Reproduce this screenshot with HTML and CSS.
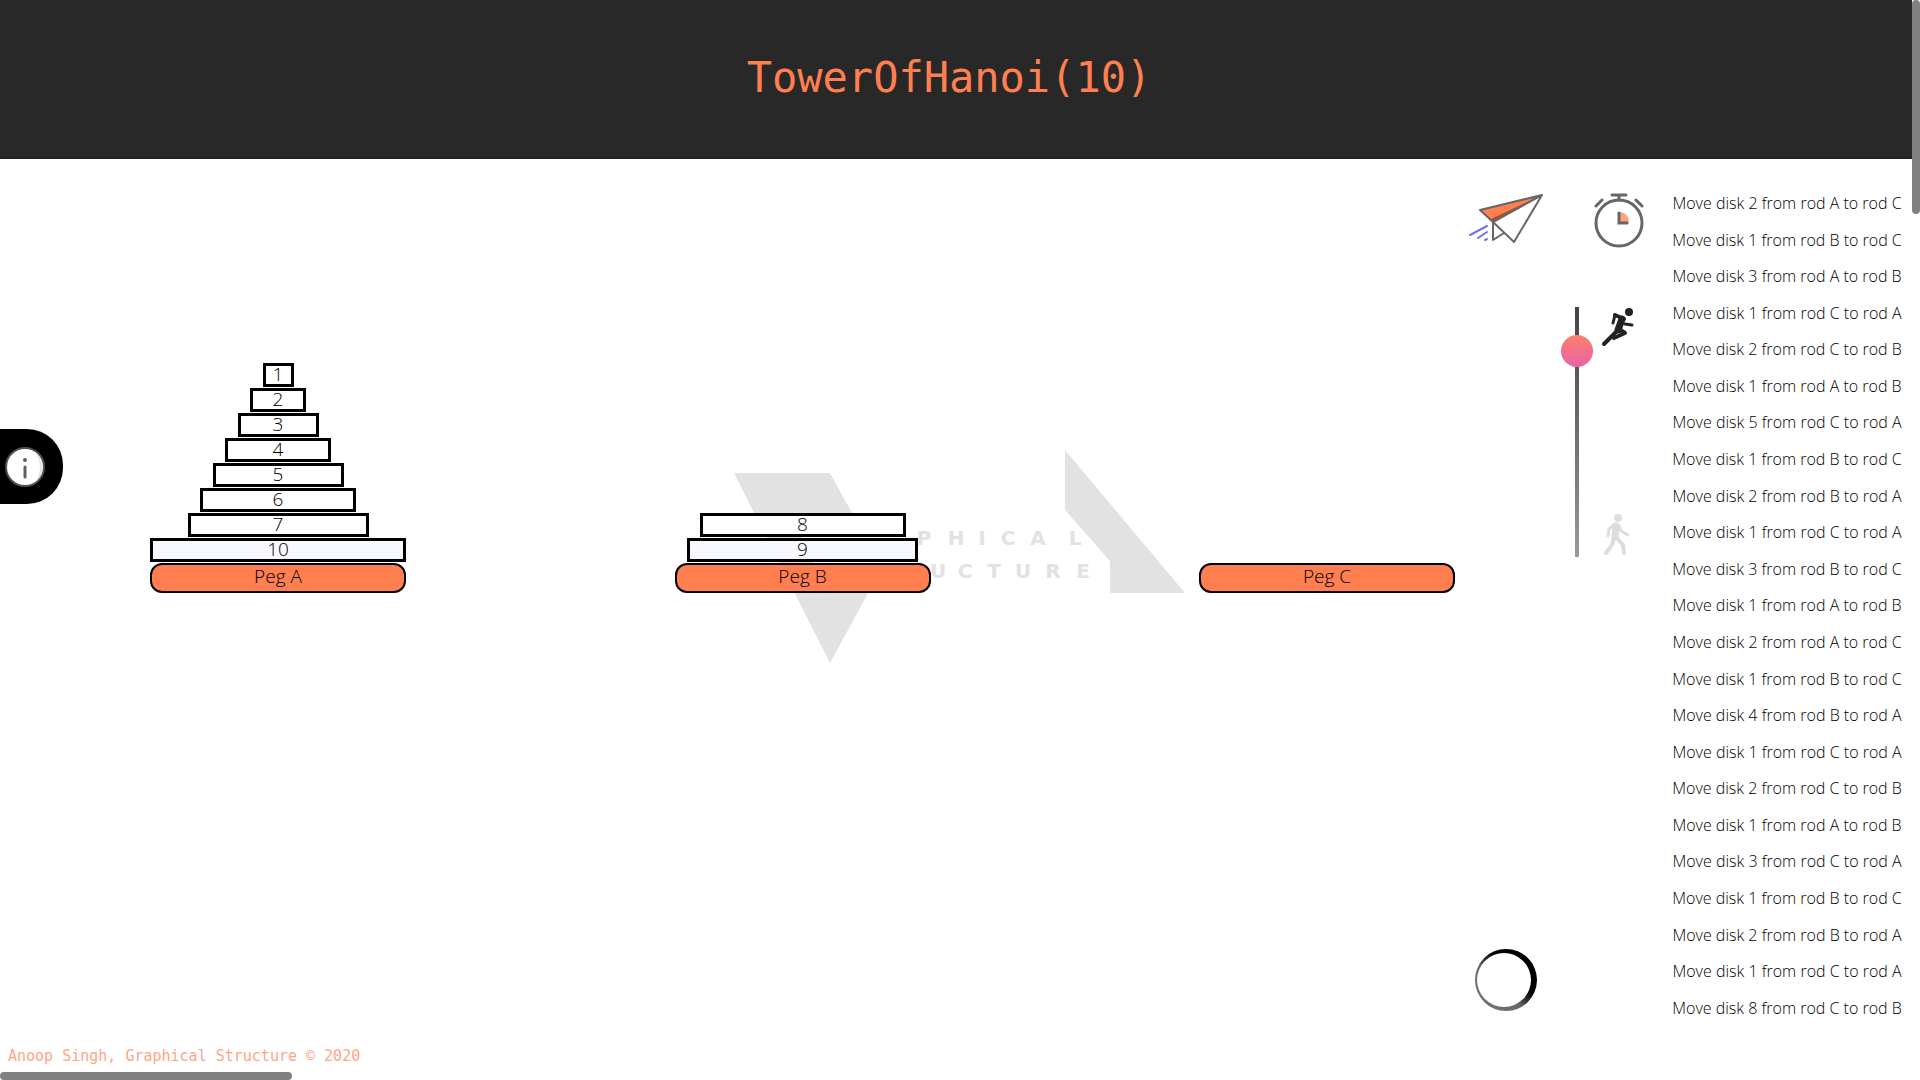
FILE: index.html
```html
<!DOCTYPE html>
<html lang="en">
<head>
<meta charset="utf-8">
<title>Tower of Hanoi</title>
<link rel="stylesheet" href="styles.css">
</head>
<body>
<header class="header"><h1 class="title">TowerOfHanoi(10)</h1></header>
<main class="main">
  <section class="board">
    <svg class="watermark" viewBox="0 0 470 220" aria-hidden="true">
      <path d="M13 23H109L131 63H71L98 125H157L109 213Z"/>
      <path d="M344 0L464 143H389V111L344 60Z"/>
      <g class="brand">
        <text y="95" x="203 235 261 287 317 354">PHICAL</text>
        <text y="128" x="217 244 273 302 332 362">UCTURE</text>
      </g>
    </svg>
    <div class="peg">
      <div class="disk d1">1</div>
      <div class="disk d2">2</div>
      <div class="disk d3">3</div>
      <div class="disk d4">4</div>
      <div class="disk d5">5</div>
      <div class="disk d6">6</div>
      <div class="disk d7">7</div>
      <div class="disk d10">10</div>
      <div class="base">Peg A</div>
    </div>
    <div class="peg">
      <div class="disk d8">8</div>
      <div class="disk d9">9</div>
      <div class="base">Peg B</div>
    </div>
    <div class="peg">
      <div class="base">Peg C</div>
    </div>
  </section>
  <aside class="tools">
    <div class="actions">
      <button class="icon-button" aria-label="Start">
        <svg width="78" height="56" viewBox="0 0 78 56" fill="none" stroke-linecap="round" stroke-linejoin="round">
          <path d="M12 17L74 2L25 29Z" fill="#ff7f50"/>
          <path d="M25 29L74 2L23 26Z" fill="#a8502f"/>
          <path d="M12 17L74 2L46 49L25 29ZM25 29L74 2M25 29V47L36 40" stroke="#666" stroke-width="2"/>
          <path d="M2 42L19 33M10 45L19 39M17 47L19 46" stroke="#7373e6" stroke-width="2"/>
        </svg>
      </button>
      <button class="icon-button" aria-label="Timer">
        <svg width="50" height="56" viewBox="0 0 50 56" fill="none" stroke="#666" stroke-linecap="round">
          <circle cx="25" cy="30" r="23" stroke-width="3"/>
          <path d="M25 2V7M18 2H32M2 13L8 7M42 7L48 13" stroke-width="3"/>
          <path d="M26 19A10 10 0 0 1 35 30H26Z" fill="#ff9f7c" stroke="none"/>
          <path d="M25 20V30H33" stroke-width="3"/>
        </svg>
      </button>
    </div>
    <div class="speed">
      <input class="slider" type="range" min="0" max="100" value="87" aria-label="Speed">
      <div class="paces">
        <svg width="34" height="40" viewBox="0 0 34 40" fill="none" stroke="#222" stroke-linecap="round" stroke-linejoin="round">
          <circle cx="28" cy="5" r="4" fill="#222" stroke="none"/>
          <path d="M14 8L23 12" stroke-width="4"/>
          <path d="M21 12L17 23" stroke-width="7"/>
          <path d="M14 8L12 16M24 17L31 18" stroke-width="3"/>
          <path d="M17 23L11 29L3 37" stroke-width="4"/>
          <path d="M18 22L24 26L13 31" stroke-width="4"/>
        </svg>
        <svg width="34" height="44" viewBox="0 0 34 44" fill="none" stroke="#ddd" stroke-linecap="round" stroke-linejoin="round">
          <circle cx="17" cy="5" r="4" fill="#ddd" stroke="none"/>
          <path d="M15 13L14 24" stroke-width="7"/>
          <path d="M14 11L8 16L7 23M18 13L20 18L27 22" stroke-width="3"/>
          <path d="M13 24L11 32L5 40M15 24L22 32L23 40" stroke-width="4"/>
        </svg>
      </div>
    </div>
    <svg class="spinner" width="64" height="64" viewBox="0 0 64 64" role="img" aria-label="Running">
      <defs><linearGradient id="ring" x1="0" y1="1" x2="1" y2="0"><stop offset="0" stop-color="#777"/><stop offset=".4" stop-color="#666"/><stop offset=".6" stop-color="#000"/></linearGradient></defs>
      <path fill="url(#ring)" fill-rule="evenodd" d="M32 1a31 31 0 1 0 0 62a31 31 0 1 0 0-62ZM30 5a27 27 0 1 1 0 54a27 27 0 1 1 0-54Z"/>
    </svg>
  </aside>
  <ol class="moves">
    <li>Move disk 2 from rod A to rod C</li>
    <li>Move disk 1 from rod B to rod C</li>
    <li>Move disk 3 from rod A to rod B</li>
    <li>Move disk 1 from rod C to rod A</li>
    <li>Move disk 2 from rod C to rod B</li>
    <li>Move disk 1 from rod A to rod B</li>
    <li>Move disk 5 from rod C to rod A</li>
    <li>Move disk 1 from rod B to rod C</li>
    <li>Move disk 2 from rod B to rod A</li>
    <li>Move disk 1 from rod C to rod A</li>
    <li>Move disk 3 from rod B to rod C</li>
    <li>Move disk 1 from rod A to rod B</li>
    <li>Move disk 2 from rod A to rod C</li>
    <li>Move disk 1 from rod B to rod C</li>
    <li>Move disk 4 from rod B to rod A</li>
    <li>Move disk 1 from rod C to rod A</li>
    <li>Move disk 2 from rod C to rod B</li>
    <li>Move disk 1 from rod A to rod B</li>
    <li>Move disk 3 from rod C to rod A</li>
    <li>Move disk 1 from rod B to rod C</li>
    <li>Move disk 2 from rod B to rod A</li>
    <li>Move disk 1 from rod C to rod A</li>
    <li>Move disk 8 from rod C to rod B</li>
  </ol>
</main>
<footer class="footer">Anoop Singh, Graphical Structure © 2020</footer>
<button class="info" aria-label="Information">
  <svg width="42" height="42" viewBox="0 0 42 42">
    <circle cx="21" cy="21" r="19" fill="#fff" stroke="#4b4f58" stroke-width="2"/>
    <path d="M30 5A19 19 0 0 1 30 37Q42 21 30 5Z" fill="#e4e6e6"/>
    <circle cx="21" cy="14" r="2" fill="#5c5f66"/>
    <path d="M21 21V31" stroke="#5c5f66" stroke-width="3" stroke-linecap="round"/>
  </svg>
</button>
<div class="scroll-y"></div>
<div class="scroll-x"></div>
</body>
</html>
```
FILE: styles.css
```css
* { box-sizing: border-box; }
body {
  margin: 0;
  min-height: 100vh;
  display: flex;
  flex-direction: column;
  padding: 0 8px 12px 0;
  background: #fff;
  color: #000;
  font-family: "Open Sans", sans-serif;
  font-weight: 300;
}
button { padding: 0; border: 0; background: none; cursor: pointer; }
svg { display: block; }

.header { background: #282828; padding: 51px 14px 52px 0; border-bottom: 2px solid #222; }
.title {
  margin: 0;
  color: #ff7f50;
  font: 400 42px/54px "DejaVu Sans Mono", monospace;
  text-align: center;
}

.main { flex: 1; display: flex; padding: 34px 0 12px 150px; }

.board {
  position: relative;
  flex: 1;
  display: flex;
  justify-content: space-between;
  align-items: flex-end;
  height: 400px;
}
.watermark { position: absolute; left: 571px; top: 257px; width: 470px; height: 220px; fill: #e2e2e2; }
.brand { font: 700 20px "DejaVu Sans", sans-serif; text-anchor: middle; }
.peg { position: relative; display: flex; flex-direction: column; align-items: center; gap: 1px; width: 256px; }
.disk {
  height: 24px;
  border: 3px solid #000;
  background: #fff;
  font-size: 19px;
  line-height: 17px;
  text-align: center;
}
.d1 { width: 31px; }
.d2 { width: 56px; }
.d3 { width: 81px; }
.d4 { width: 106px; }
.d5 { width: 131px; }
.d6 { width: 156px; }
.d7 { width: 181px; }
.d8 { width: 206px; }
.d9 { width: 231px; background: #f8f8ff; }
.d10 { width: 256px; background: #f8f8ff; }
.base {
  width: 256px;
  height: 30px;
  border: 2px solid #000;
  border-radius: 12px;
  background: #ff7f50;
  font-size: 19px;
  line-height: 23px;
  text-align: center;
}

.tools { width: 207px; display: flex; flex-direction: column; padding: 0 18px 0 13px; }
.actions { display: flex; justify-content: space-between; }
.speed { display: flex; gap: 8px; margin-top: 58px; padding-left: 93px; }
.slider {
  appearance: none;
  writing-mode: vertical-lr;
  direction: rtl;
  width: 32px;
  height: 250px;
  margin: 0;
  background: linear-gradient(#444, #999) center / 4px 100% no-repeat;
}
.slider::-webkit-slider-thumb {
  appearance: none;
  width: 32px;
  height: 32px;
  border-radius: 50%;
  background: linear-gradient(#ff7f6a, #e563a8);
}
.paces { display: flex; flex-direction: column; justify-content: space-between; }
.spinner { margin: auto 0 20px 6px; }

.moves {
  display: flex;
  flex-direction: column;
  justify-content: space-between;
  width: 250px;
  margin: 0 0 14px;
  padding: 0;
  list-style: none;
  font-size: 16px;
  line-height: 20px;
  text-align: center;
}

.footer { padding: 0 8px; color: #ffa585; font: 400 15px/24px "DejaVu Sans Mono", monospace; }

.info {
  position: fixed;
  left: 0;
  top: 429px;
  width: 63px;
  height: 75px;
  padding-left: 4px;
  border-radius: 0 36px 36px 0;
  background: #000;
}
.scroll-y, .scroll-x { position: fixed; background: #808080; border-radius: 4px; }
.scroll-y { top: 0; right: 0; width: 8px; height: 214px; }
.scroll-x { left: 0; bottom: 0; width: 292px; height: 8px; }
```
